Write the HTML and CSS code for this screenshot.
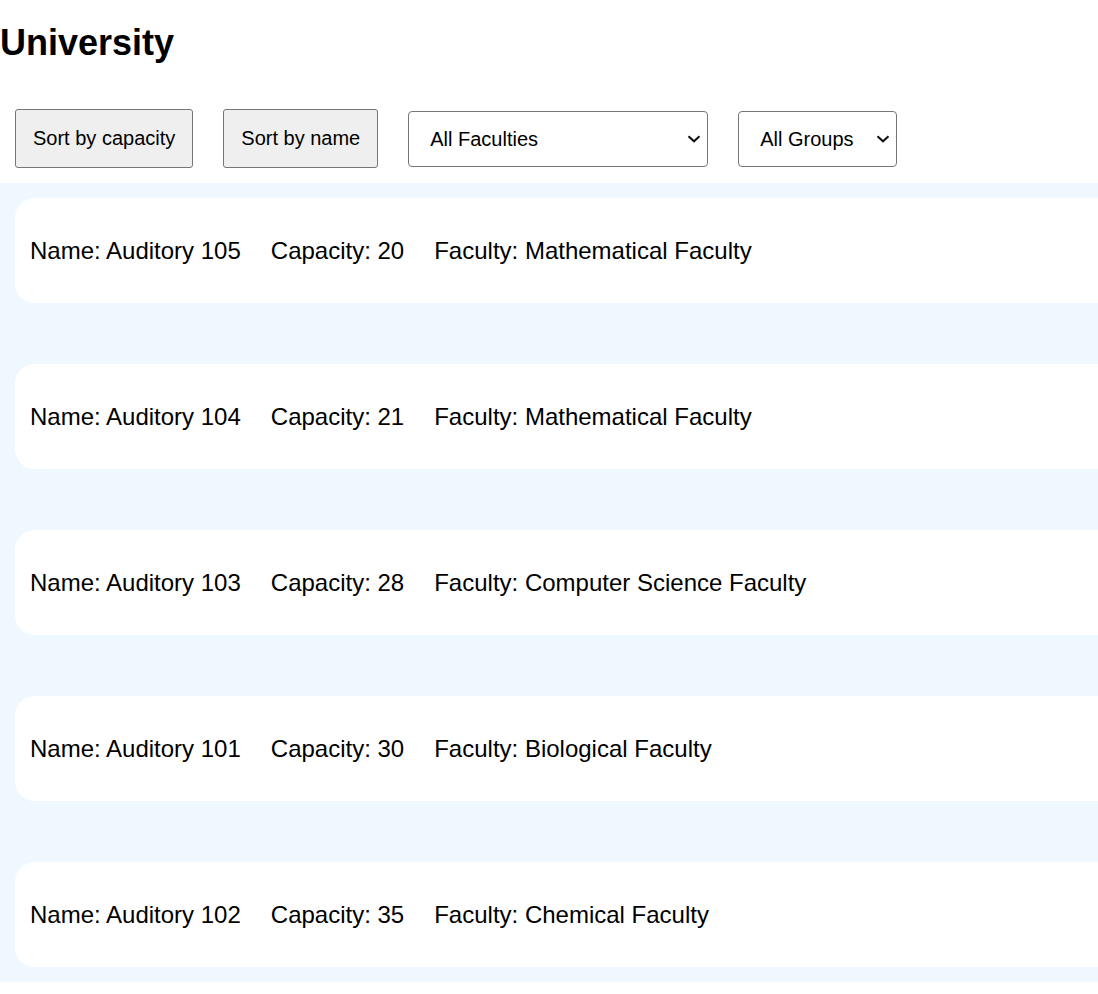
FILE: index.html
```html
<!DOCTYPE html>
<html lang="en">
<head>
<meta charset="utf-8">
<title>University</title>
<link rel="stylesheet" href="styles.css">
</head>
<body>
<h1 class="title">University</h1>
<div class="toolbar">
  <button class="btn">Sort by capacity</button>
  <button class="btn">Sort by name</button>
  <div class="select-wrap">
    <select class="select select-faculty">
      <option>All Faculties</option>
      <option>Mathematical Faculty</option>
      <option>Computer Science Faculty</option>
      <option>Biological Faculty</option>
      <option>Chemical Faculty</option>
    </select>
    <svg class="chevron" width="14" height="8" viewBox="0 0 14 8"><path d="M1.5 1.2 L7 6.3 L12.5 1.2" fill="none" stroke="#111" stroke-width="2"/></svg>
  </div>
  <div class="select-wrap">
    <select class="select select-group">
      <option>All Groups</option>
    </select>
    <svg class="chevron" width="14" height="8" viewBox="0 0 14 8"><path d="M1.5 1.2 L7 6.3 L12.5 1.2" fill="none" stroke="#111" stroke-width="2"/></svg>
  </div>
</div>
<div class="list">
  <div class="card"><span>Name: Auditory 105</span><span>Capacity: 20</span><span>Faculty: Mathematical Faculty</span></div>
  <div class="card"><span>Name: Auditory 104</span><span>Capacity: 21</span><span>Faculty: Mathematical Faculty</span></div>
  <div class="card"><span>Name: Auditory 103</span><span>Capacity: 28</span><span>Faculty: Computer Science Faculty</span></div>
  <div class="card"><span>Name: Auditory 101</span><span>Capacity: 30</span><span>Faculty: Biological Faculty</span></div>
  <div class="card"><span>Name: Auditory 102</span><span>Capacity: 35</span><span>Faculty: Chemical Faculty</span></div>
</div>
</body>
</html>
```
FILE: styles.css
```css
html, body {
  margin: 0;
  padding: 0;
  background: #ffffff;
  overflow-x: hidden;
}
body {
  font-family: "Liberation Sans", Arial, sans-serif;
  color: #000;
}
.title {
  margin: 0 0 31px 0;
  padding-top: 22px;
  font-size: 36px;
  line-height: 41px;
  font-weight: bold;
}
.toolbar {
  display: flex;
  align-items: center;
  gap: 30px;
  padding: 15px;
}
.btn {
  font-family: "Liberation Sans", Arial, sans-serif;
  font-size: 20px;
  height: 59px;
  padding: 0 17px;
  background: #efefef;
  border: 1px solid #767676;
  border-radius: 3px;
  color: #000;
}
.select-wrap {
  position: relative;
  display: flex;
}
.select {
  appearance: none;
  -webkit-appearance: none;
  font-family: "Liberation Sans", Arial, sans-serif;
  font-size: 20px;
  height: 56px;
  padding: 0 0 0 21px;
  background: #fff;
  border: 1px solid #767676;
  border-radius: 4px;
  color: #000;
}
.select-faculty { width: 300px; }
.select-group { width: 159px; }
.chevron {
  position: absolute;
  right: 7px;
  top: 24px;
  pointer-events: none;
}
.list {
  background: #f0f8ff;
  padding: 15px 0 15px 15px;
  display: flex;
  flex-direction: column;
  gap: 61px;
  overflow: hidden;
}
.card {
  background: #fff;
  border-radius: 20px;
  height: 105px;
  margin-right: -40px;
  padding: 0 15px;
  display: flex;
  align-items: center;
  gap: 30px;
  font-size: 24px;
}
```
